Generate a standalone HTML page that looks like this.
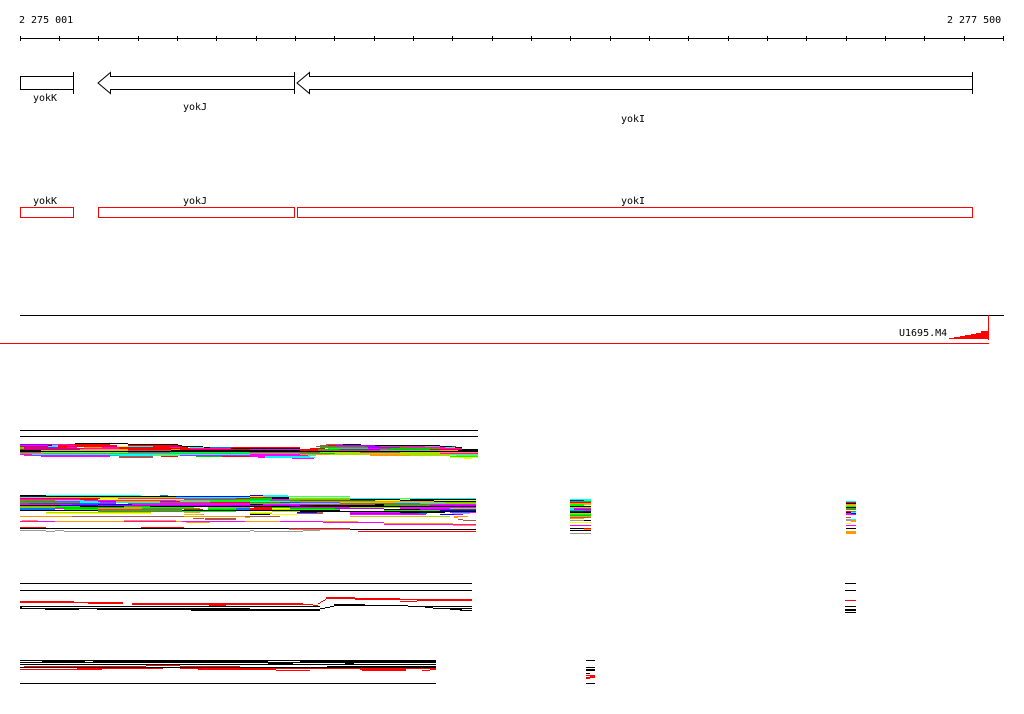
<!DOCTYPE html>
<html><head><meta charset="utf-8"><title>yokK yokJ yokI</title>
<style>
html,body{margin:0;padding:0;background:#fff;width:1024px;height:714px;overflow:hidden}
svg{display:block}
text{font-family:"DejaVu Sans Mono","Liberation Mono",monospace;font-size:10px;fill:#000}
path{fill:none;stroke-width:1}
.k{stroke:#000}.r{stroke:#f00}.g{stroke:#0f0}.b{stroke:#00f}.B{stroke:#07f}.c{stroke:#0ff}.m{stroke:#f0f}.o{stroke:#f90}.y{stroke:#ff0}.Y{stroke:#ad0}.s{stroke:#a65a50}.a{stroke:#999}.p{stroke:#a0f}.G{stroke:#0c0}.w{stroke:#fff}.n{stroke:#00d0a0}.d{stroke:#80f}
</style></head><body>
<svg width="1024" height="714" viewBox="0 0 1024 714" shape-rendering="crispEdges">
<text x="19" y="23">2 275 001</text><text x="947" y="23">2 277 500</text>
<path class="k" d="M20 38.5H1004M20.5 36V41M59.5 36V41M98.5 36V41M138.5 36V41M177.5 36V41M216.5 36V41M256.5 36V41M295.5 36V41M334.5 36V41M374.5 36V41M413.5 36V41M452.5 36V41M492.5 36V41M531.5 36V41M570.5 36V41M610.5 36V41M649.5 36V41M688.5 36V41M728.5 36V41M767.5 36V41M806.5 36V41M846.5 36V41M885.5 36V41M924.5 36V41M964.5 36V41M1003.5 36V41"/>
<path class="k" d="M73.5 72V94M20.5 76.5H73M20.5 89.5H73M20.5 76V90"/>
<path class="k" shape-rendering="auto" d="M294.5 72V94M294 76.5H110.5V72.5L98 83L110.5 93.5V89.5H294"/>
<path class="k" shape-rendering="auto" d="M972.5 72V94M972 76.5H309.5V72.5L297 83L309.5 93.5V89.5H972"/>
<text x="33" y="101">yokK</text><text x="183" y="110">yokJ</text><text x="621" y="122">yokI</text>
<text x="33" y="204">yokK</text><text x="183" y="204">yokJ</text><text x="621" y="204">yokI</text>
<path class="r" d="M20.5 207.5H73.5V217.5H20.5ZM98.5 207.5H294.5V217.5H98.5ZM297.5 207.5H972.5V217.5H297.5Z"/>
<path class="k" d="M20 315.5H1004"/>
<text x="899" y="336">U1695.M4</text>
<path class="r" d="M988.5 315V340M0 343.5H989"/>
<path style="fill:#f00;stroke:none" d="M949 339V338H954V337H960V336H965V335H971V334H976V333H981V331H988V339Z"/>

<!-- section 1 -->
<path class="k" d="M20 430.5H478M20 436.5H478"/>
<path class="k" d="M75 443.5H128"/>
<path class="d" d="M20 444.5H48"/><path class="r" d="M48 444.5H52M67 444.5H110"/><path class="m" d="M52 444.5H67"/><path class="k" d="M128 444.5H178M343 444.5H361"/><path class="s" d="M326 444.5H343"/>
<path class="m" d="M20 445.5H48M67 445.5H75"/><path class="b" d="M48 445.5H52"/><path class="c" d="M52 445.5H58"/><path class="r" d="M58 445.5H67M75 445.5H117"/><path class="k" d="M178 445.5H182M375 445.5H440"/><path class="r" d="M128 445.5H178"/><path class="s" d="M320 445.5H328"/><path class="r" d="M328 445.5H335"/><path class="p" d="M335 445.5H375"/>
<path class="r" d="M20 446.5H48M58 446.5H117M153 446.5H182"/><path class="c" d="M48 446.5H58M128 446.5H153"/><path class="y" d="M117 446.5H128"/><path class="k" d="M182 446.5H203M440 446.5H452"/><path class="s" d="M316 446.5H335M380 446.5H405"/><path class="m" d="M335 446.5H365M405 446.5H425"/><path class="p" d="M365 446.5H380"/><path class="a" d="M425 446.5H440"/><path class="r" d="M452 446.5H456"/>
<path class="p" d="M24 447.5H58"/><path class="g" d="M20 447.5H24"/><path class="r" d="M58 447.5H67M119 447.5H170M180 447.5H188M204 447.5H210"/><path class="w" d="M77 447.5H84"/><path class="o" d="M84 447.5H102"/><path class="m" d="M67 447.5H77M102 447.5H119M170 447.5H180"/><path class="c" d="M190 447.5H204"/><path class="k" d="M204 447.5H231"/><path class="B" d="M210 447.5H231"/><path class="r" d="M231 447.5H300"/><path class="G" d="M320 447.5H368"/><path class="p" d="M368 447.5H400"/><path class="s" d="M400 447.5H430"/><path class="m" d="M430 447.5H445"/><path class="c" d="M445 447.5H455"/><path class="k" d="M455 447.5H462"/>
<path class="g" d="M20 448.5H24"/><path class="p" d="M24 448.5H84"/><path class="m" d="M84 448.5H119"/><path class="r" d="M119 448.5H190"/><path class="m" d="M190 448.5H231"/><path class="k" d="M231 448.5H300"/><path class="w" d="M300 448.5H310"/><path class="r" d="M310 448.5H325"/><path class="g" d="M328 448.5H368"/><path class="m" d="M368 448.5H390"/><path class="G" d="M390 448.5H440"/><path class="m" d="M440 448.5H462"/>
<path class="r" d="M20 449.5H80"/><path class="o" d="M80 449.5H128M171 449.5H180"/><path class="r" d="M128 449.5H171M180 449.5H250"/><path class="m" d="M250 449.5H300"/><path class="r" d="M300 449.5H318"/><path class="G" d="M318 449.5H340"/><path class="p" d="M340 449.5H380"/><path class="G" d="M380 449.5H430"/><path class="r" d="M430 449.5H462"/><path class="k" d="M462 449.5H478"/>
<path class="k" d="M20 450.5H41"/><path class="Y" d="M41 450.5H128"/><path class="s" d="M128 450.5H171"/><path class="k" d="M171 450.5H300"/><path class="r" d="M300 450.5H318"/><path class="s" d="M318 450.5H380"/><path class="a" d="M380 450.5H440"/><path class="o" d="M440 450.5H458"/><path class="k" d="M458 450.5H478"/>
<path class="k" d="M20 451.5H478"/>
<path class="s" d="M20 452.5H41M128 452.5H170M250 452.5H320"/><path class="Y" d="M41 452.5H128M320 452.5H360M400 452.5H440"/><path class="g" d="M170 452.5H250"/><path class="s" d="M360 452.5H400"/><path class="o" d="M440 452.5H478"/>
<path class="a" d="M20 453.5H44M250 453.5H300"/><path class="n" d="M44 453.5H250"/><path class="G" d="M300 453.5H335"/><path class="Y" d="M335 453.5H440"/><path class="m" d="M440 453.5H478"/>
<path class="m" d="M20 454.5H32M250 454.5H300"/><path class="c" d="M32 454.5H250"/><path class="o" d="M300 454.5H330"/><path class="Y" d="M330 454.5H370"/><path class="o" d="M370 454.5H400"/><path class="Y" d="M400 454.5H450"/><path class="c" d="M450 454.5H478"/>
<path class="s" d="M24 455.5H32"/><path class="m" d="M32 455.5H110M180 455.5H308"/><path class="n" d="M110 455.5H119"/><path class="c" d="M119 455.5H153M308 455.5H316"/><path class="Y" d="M153 455.5H180"/><path class="o" d="M370 455.5H410"/><path class="Y" d="M410 455.5H450"/><path class="y" d="M450 455.5H456"/><path class="Y" d="M456 455.5H478"/>
<path class="m" d="M41 456.5H110M250 456.5H265"/><path class="s" d="M119 456.5H153"/><path class="r" d="M161 456.5H178M222 456.5H250"/><path class="G" d="M196 456.5H222"/><path class="c" d="M265 456.5H310"/><path class="g" d="M450 456.5H478"/>
<path class="s" d="M119 457.5H153"/><path class="m" d="M258 457.5H265"/><path class="c" d="M265 457.5H315"/><path class="y" d="M450 457.5H478"/>
<path class="m" d="M292 458.5H314"/><path class="y" d="M464 458.5H472"/>

<!-- section 2 -->
<path class="k" d="M20 495.5H46"/><path class="c" d="M46 495.5H141"/><path class="B" d="M160 495.5H168"/><path class="b" d="M250 495.5H263"/><path class="c" d="M263 495.5H288"/>
<path class="b" d="M20 496.5H46"/><path class="k" d="M46 496.5H176"/><path class="b" d="M176 496.5H250"/><path class="y" d="M250 496.5H263"/><path class="c" d="M263 496.5H350"/>
<path class="Y" d="M20 497.5H176"/><path class="c" d="M176 497.5H250"/><path class="r" d="M250 497.5H272"/><path class="k" d="M272 497.5H289"/><path class="y" d="M289 497.5H350"/>
<path class="r" d="M20 498.5H100"/><path class="y" d="M100 498.5H118"/><path class="m" d="M118 498.5H184"/><path class="G" d="M184 498.5H236"/><path class="r" d="M236 498.5H250"/><path class="G" d="M250 498.5H272"/><path class="k" d="M272 498.5H289"/><path class="o" d="M289 498.5H350"/><path class="c" d="M350 498.5H476"/>
<path class="m" d="M20 499.5H80"/><path class="r" d="M80 499.5H98"/><path class="y" d="M98 499.5H184"/><path class="m" d="M184 499.5H236"/><path class="G" d="M236 499.5H272"/><path class="m" d="M272 499.5H289"/><path class="g" d="M289 499.5H350"/><path class="k" d="M350 499.5H400M410 499.5H476"/><path class="y" d="M400 499.5H410"/>
<path class="G" d="M20 500.5H55"/><path class="c" d="M55 500.5H84"/><path class="m" d="M84 500.5H116"/><path class="s" d="M116 500.5H176"/><path class="o" d="M176 500.5H210"/><path class="g" d="M210 500.5H270"/><path class="s" d="M270 500.5H300"/><path class="r" d="M300 500.5H375"/><path class="y" d="M375 500.5H400"/><path class="k" d="M400 500.5H434"/><path class="y" d="M434 500.5H476"/>
<path class="s" d="M20 501.5H55"/><path class="m" d="M55 501.5H80"/><path class="c" d="M80 501.5H98"/><path class="p" d="M98 501.5H116"/><path class="o" d="M116 501.5H160"/><path class="p" d="M160 501.5H180"/><path class="c" d="M180 501.5H210"/><path class="g" d="M210 501.5H250"/><path class="c" d="M250 501.5H290"/><path class="g" d="M290 501.5H375"/><path class="o" d="M375 501.5H434"/><path class="k" d="M434 501.5H476"/>
<path class="G" d="M20 502.5H80"/><path class="c" d="M80 502.5H100"/><path class="m" d="M100 502.5H116"/><path class="c" d="M116 502.5H160"/><path class="s" d="M160 502.5H210"/><path class="r" d="M210 502.5H250"/><path class="s" d="M250 502.5H280"/><path class="p" d="M280 502.5H300"/><path class="m" d="M300 502.5H340"/><path class="Y" d="M340 502.5H395"/><path class="c" d="M395 502.5H445"/><path class="g" d="M445 502.5H476"/>
<path class="m" d="M20 503.5H29"/><path class="p" d="M29 503.5H80"/><path class="B" d="M80 503.5H116"/><path class="w" d="M116 503.5H128"/><path class="s" d="M128 503.5H160"/><path class="m" d="M160 503.5H250"/><path class="g" d="M250 503.5H290"/><path class="c" d="M290 503.5H340"/><path class="s" d="M340 503.5H420"/><path class="o" d="M420 503.5H476"/>
<path class="m" d="M20 504.5H72"/><path class="p" d="M72 504.5H98"/><path class="b" d="M98 504.5H132"/><path class="m" d="M132 504.5H250"/><path class="k" d="M250 504.5H263"/><path class="m" d="M263 504.5H310"/><path class="s" d="M310 504.5H375"/><path class="k" d="M375 504.5H384"/><path class="s" d="M384 504.5H435"/><path class="m" d="M435 504.5H476"/>
<path class="k" d="M20 505.5H60"/><path class="b" d="M60 505.5H98"/><path class="p" d="M98 505.5H300"/><path class="k" d="M300 505.5H384"/><path class="G" d="M384 505.5H430"/><path class="p" d="M430 505.5H476"/>
<path class="g" d="M20 506.5H80"/><path class="k" d="M80 506.5H124"/><path class="G" d="M124 506.5H150"/><path class="k" d="M150 506.5H476"/>
<path class="o" d="M20 507.5H55"/><path class="G" d="M55 507.5H124"/><path class="o" d="M124 507.5H142"/><path class="g" d="M142 507.5H194"/><path class="w" d="M194 507.5H208"/><path class="a" d="M208 507.5H250"/><path class="r" d="M254 507.5H272"/><path class="G" d="M272 507.5H290"/><path class="m" d="M290 507.5H350"/><path class="Y" d="M350 507.5H400"/><path class="m" d="M400 507.5H476"/>
<path class="B" d="M20 508.5H55"/><path class="m" d="M55 508.5H64"/><path class="G" d="M64 508.5H98"/><path class="o" d="M98 508.5H142"/><path class="G" d="M142 508.5H200"/><path class="w" d="M200 508.5H208"/><path class="g" d="M208 508.5H236"/><path class="B" d="M236 508.5H250"/><path class="r" d="M250 508.5H272"/><path class="y" d="M272 508.5H290"/><path class="G" d="M290 508.5H335"/><path class="p" d="M335 508.5H384"/><path class="w" d="M384 508.5H400"/><path class="m" d="M400 508.5H450"/><path class="c" d="M450 508.5H476"/>
<path class="B" d="M20 509.5H55"/><path class="w" d="M55 509.5H64"/><path class="g" d="M64 509.5H98"/><path class="s" d="M98 509.5H182"/><path class="r" d="M184 509.5H203"/><path class="G" d="M208 509.5H236"/><path class="B" d="M236 509.5H250"/><path class="r" d="M250 509.5H272"/><path class="Y" d="M272 509.5H290"/><path class="g" d="M290 509.5H340"/><path class="w" d="M340 509.5H384"/><path class="k" d="M384 509.5H420"/><path class="p" d="M420 509.5H452"/><path class="r" d="M452 509.5H476"/>
<path class="k" d="M20 510.5H98"/><path class="G" d="M98 510.5H182"/><path class="k" d="M182 510.5H340"/><path class="w" d="M340 510.5H384"/><path class="g" d="M384 510.5H440"/><path class="b" d="M440 510.5H476"/>
<path class="s" d="M98 511.5H182"/><path class="g" d="M182 511.5H236"/><path class="Y" d="M272 511.5H300"/><path class="k" d="M300 511.5H476"/>
<path class="Y" d="M46 512.5H151"/><path class="o" d="M184 512.5H200"/><path class="y" d="M250 512.5H272"/><path class="b" d="M297 512.5H317"/><path class="s" d="M317 512.5H323"/><path class="m" d="M350 512.5H400"/><path class="k" d="M400 512.5H445"/><path class="m" d="M450 512.5H476"/>
<path class="y" d="M46 513.5H151"/><path class="Y" d="M250 513.5H272"/><path class="s" d="M297 513.5H323"/><path class="p" d="M350 513.5H418"/><path class="B" d="M418 513.5H427"/><path class="c" d="M452 513.5H470"/>
<path class="o" d="M200 514.5H204"/><path class="Y" d="M184 514.5H200"/><path class="k" d="M250 514.5H270"/><path class="y" d="M272 514.5H297"/><path class="m" d="M350 514.5H426"/><path class="b" d="M440 514.5H454"/><path class="p" d="M454 514.5H463"/>
<path class="o" d="M20 516.5H72"/><path class="s" d="M72 516.5H184"/><path class="o" d="M184 516.5H245"/><path class="s" d="M245 516.5H280"/><path class="Y" d="M350 516.5H450"/><path class="o" d="M454 516.5H468"/>
<path class="s" d="M193 518.5H204M205 518.5H236"/><path class="o" d="M454 517.5H458M245 517.5H250"/>
<path class="o" d="M22 520.5H38M124 520.5H176"/><path class="s" d="M458 519.5H463M463 520.5H476M205 519.5H236"/>
<path class="m" d="M20 521.5H55M124 521.5H176M182 521.5H245M280 521.5H323"/><path class="o" d="M55 521.5H124M176 521.5H182M245 521.5H280M323 521.5H358"/>
<path class="m" d="M323 522.5H384"/><path class="o" d="M186 522.5H210M384 523.5H453"/><path class="m" d="M384 524.5H476"/><path class="o" d="M453 525.5H476"/>
<path class="r" d="M20 527.5H46M141 527.5H184"/>
<path class="k" d="M20 528.5H289"/><path class="r" d="M289 528.5H350"/><path class="k" d="M350 529.5H476"/><path class="a" d="M289 529.5H350"/>
<path class="a" d="M20 530.5H46M55 530.5H64M250 530.5H254M303 530.5H320"/><path class="a" d="M46 531.5H55M64 531.5H250M254 531.5H303"/><path class="r" d="M358 531.5H476"/>

<!-- col A -->
<path class="c" d="M570 499.5H591"/><path class="b" d="M570 500.5H584"/><path class="c" d="M584 500.5H591"/><path class="G" d="M570 501.5H591"/><path class="r" d="M570 502.5H591"/><path class="o" d="M570 503.5H591"/><path class="g" d="M570 504.5H584"/><path class="Y" d="M584 504.5H591"/><path class="g" d="M570 505.5H584"/><path class="k" d="M570 506.5H591"/><path class="Y" d="M570 507.5H591"/><path class="c" d="M570 508.5H574"/><path class="m" d="M574 508.5H584"/><path class="s" d="M584 508.5H591"/><path class="c" d="M570 509.5H574"/><path class="p" d="M574 509.5H591"/><path class="G" d="M570 510.5H584"/><path class="s" d="M584 510.5H591"/><path class="b" d="M570 511.5H591"/><path class="k" d="M570 512.5H591"/><path class="Y" d="M570 513.5H591"/><path class="g" d="M570 514.5H591"/><path class="G" d="M570 515.5H591"/><path class="o" d="M570 516.5H591"/><path class="s" d="M570 517.5H591"/><path class="o" d="M570 518.5H584"/><path class="a" d="M570 520.5H584"/><path class="k" d="M584 520.5H591"/><path class="y" d="M570 522.5H591"/><path class="m" d="M570 525.5H591"/><path class="k" d="M570 528.5H584"/><path class="r" d="M584 528.5H591"/><path class="o" d="M584 529.5H591"/><path class="k" d="M570 530.5H591"/><path class="a" d="M570 533.5H591"/>
<!-- col B -->
<path class="c" d="M846 501.5H856"/><path class="r" d="M846 502.5H856"/><path class="k" d="M846 503.5H856"/><path class="o" d="M846 504.5H856"/><path class="Y" d="M846 505.5H856"/><path class="g" d="M846 506.5H856"/><path class="k" d="M846 507.5H856"/><path class="G" d="M846 508.5H856"/><path class="s" d="M846 509.5H856"/><path class="r" d="M846 511.5H851"/><path class="G" d="M851 511.5H856"/><path class="k" d="M846 512.5H851"/><path class="c" d="M851 512.5H856"/><path class="m" d="M846 513.5H851"/><path class="b" d="M851 513.5H856"/><path class="m" d="M846 514.5H856"/><path class="s" d="M846 517.5H851"/><path class="a" d="M846 519.5H851"/><path class="c" d="M851 519.5H856"/><path class="a" d="M846 520.5H851"/><path class="o" d="M851 520.5H856"/><path class="o" d="M851 521.5H856"/><path class="y" d="M846 523.5H851"/><path class="m" d="M846 525.5H856"/><path class="k" d="M846 528.5H856"/><path class="o" d="M846 531.5H856M846 532.5H856M846 533.5H856"/>
<path class="k" d="M845 583.5H856M845 590.5H856M845 606.5H856M845 609.5H856M845 610.5H856M845 612.5H856"/><path class="r" d="M845 600.5H856"/>

<!-- section 3 -->
<path class="k" d="M20 583.5H472M20 590.5H472"/>
<path class="r" d="M20 601.5H74M20 602.5H123M88 603.5H123M132 603.5H303M132 604.5H287M209 605.5H226M287 604.5H313M313 605.5H318M318 603.5H320M320 602.5H321M321 601.5H323M323 600.5H325M325 599.5H326M326 597.5H355M326 598.5H400M355 599.5H400M400 599.5H417M400 601.5H417M417 599.5H472M417 600.5H472"/>
<path class="k" d="M20 606.5H320M20 607.5H22M20 608.5H250M45 609.5H79M97 609.5H320M191 610.5H234M234 610.5H320M320 608.5H325M325 607.5H330M330 606.5H334M334 604.5H365M334 605.5H408M408 606.5H433M433 606.5H472M425 607.5H433M433 608.5H472M450 609.5H462M460 610.5H472"/>

<!-- section 4 -->
<path class="k" d="M20 660.5H436M42 661.5H85M93 661.5H268M300 661.5H436M20 662.5H436M20 664.5H436M268 663.5H293M345 663.5H354"/>
<path class="k" d="M278 662.5H293M345 662.5H354"/>
<path class="k" d="M20 667.5H436M327 666.5H436"/>
<path class="r" d="M24 666.5H146M180 666.5H240M146 665.5H180"/>
<path class="r" d="M20 669.5H77M77 668.5H102M77 669.5H102M102 668.5H163M180 668.5H436M198 669.5H276M276 670.5H310M360 669.5H406M362 670.5H406M422 670.5H430M430 669.5H436"/>
<path class="k" d="M20 683.5H436"/>
<!-- col D -->
<path class="k" d="M586 660.5H595M586 667.5H595M586 669.5H595M586 670.5H595M586 673.5H590M586 683.5H595"/><path class="r" d="M586 675.5H595M590 676.5H595M586 677.5H595M586 678.5H590"/>
</svg>
</body></html>
